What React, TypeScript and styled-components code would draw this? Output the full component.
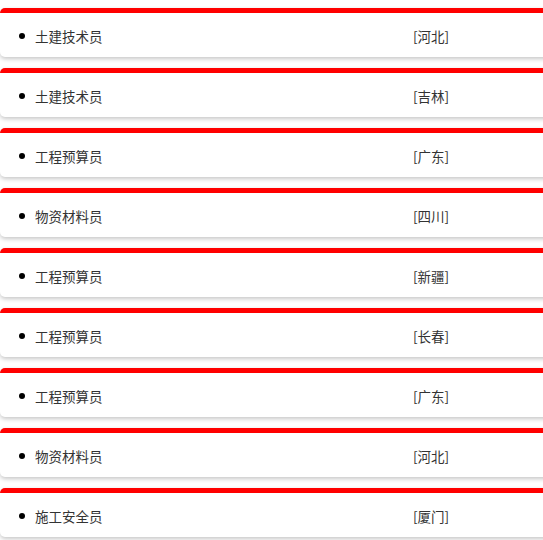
import React from "react";
import styled, { createGlobalStyle } from "styled-components";

const Global = createGlobalStyle`
  html, body { margin: 0; padding: 0; background: #fff; }
  body { font-family: "Noto Sans CJK SC", "Liberation Sans", sans-serif; }
`;

const List = styled.ul`
  margin: 0;
  padding: 8px 0 0 0;
  list-style: none;
`;

const Item = styled.li`
  display: flex;
  align-items: center;
  box-sizing: border-box;
  height: 49px;
  padding-top: 1px;
  margin-bottom: 11px;
  width: 560px;
  border-top: 5px solid #ff0000;
  border-radius: 5px;
  background: #fff;
  box-shadow: 0 2px 4px rgba(0, 0, 0, 0.22);
  font-size: 13.5px;
  color: #333;
`;

const Dot = styled.span`
  width: 6px;
  height: 6px;
  border-radius: 50%;
  background: #000;
  margin-left: 19px;
  margin-right: 10px;
  flex: none;
`;

const Title = styled.span`
  width: 378px;
`;

const Place = styled.span``;

const data: [string, string][] = [
  ["土建技术员", "河北"],
  ["土建技术员", "吉林"],
  ["工程预算员", "广东"],
  ["物资材料员", "四川"],
  ["工程预算员", "新疆"],
  ["工程预算员", "长春"],
  ["工程预算员", "广东"],
  ["物资材料员", "河北"],
  ["施工安全员", "厦门"],
];

export default function App() {
  return (
    <>
      <Global />
      <List>
        {data.map(([t, p], i) => (
          <Item key={i}>
            <Dot />
            <Title>{t}</Title>
            <Place>[{p}]</Place>
          </Item>
        ))}
      </List>
    </>
  );
}
